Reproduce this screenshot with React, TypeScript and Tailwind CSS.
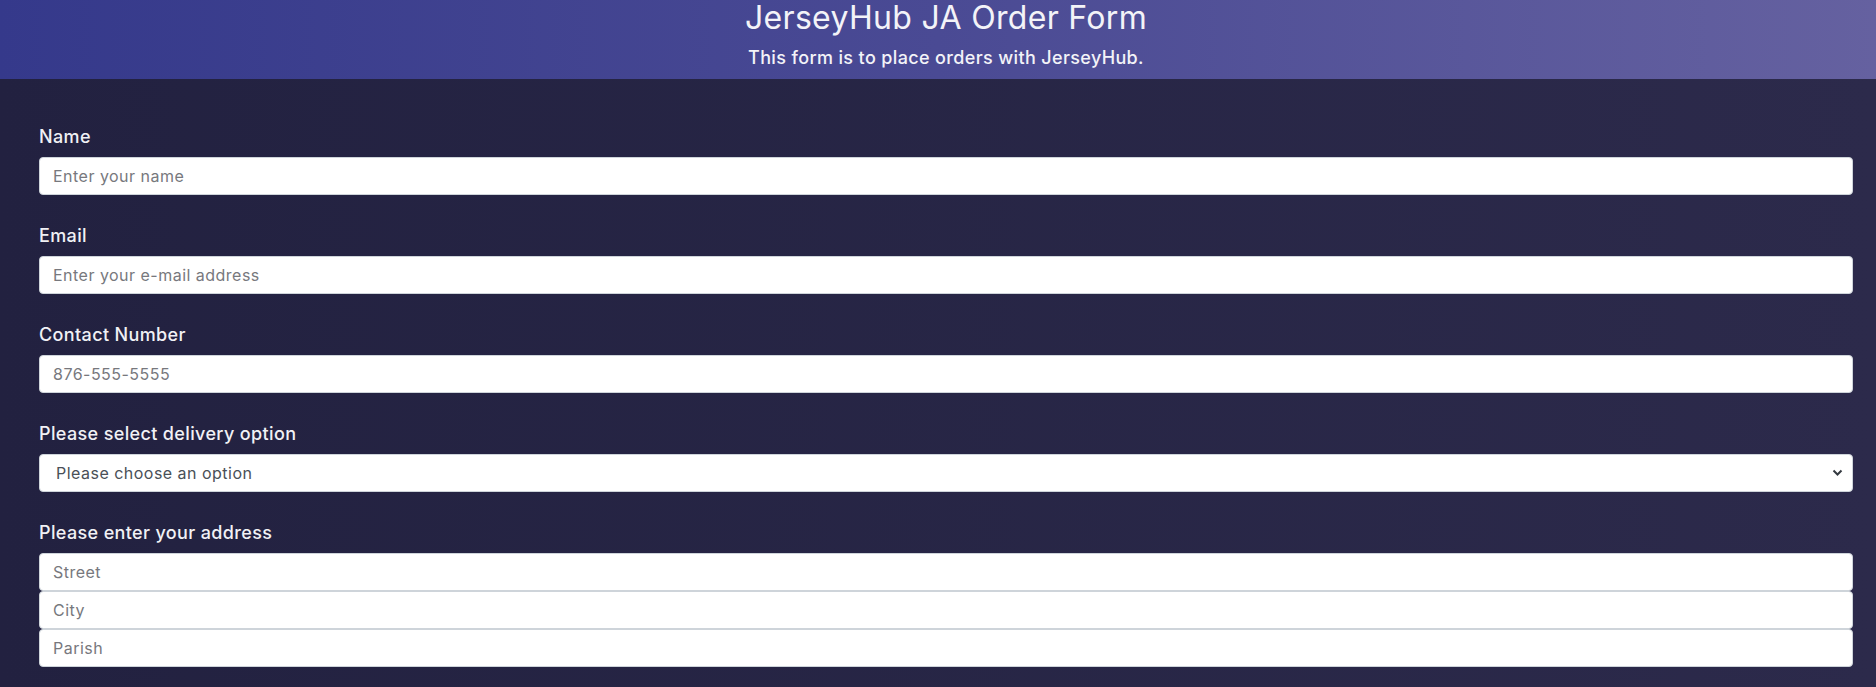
export default function App() {
  return (
    <div className="min-h-[687px] bg-gradient-to-r from-[#222140] to-[#2c2a4b] [font-family:Inter,'Open_Sans',sans-serif]">
      <header className="h-[79px] pl-[16px] bg-gradient-to-r from-[#35398b] via-[#4a4a94] to-[#6561a0] text-center flex flex-col items-center">
        <h1 className="text-[32px] leading-[36px] tracking-[0.01em] text-[#f3f3f8]">JerseyHub JA Order Form</h1>
        <p className="text-[18px] leading-[24px] tracking-[0.02em] mt-[10px] font-medium text-[#f3f3f8]">This form is to place orders with JerseyHub.</p>
      </header>
      <form className="pl-[39px] pr-[23px] pt-[44px]">
        <Field label="Name" placeholder="Enter your name" />
        <Field label="Email" placeholder="Enter your e-mail address" />
        <Field label="Contact Number" placeholder="876-555-5555" />
        <div className="mb-[27px]">
          <Label text="Please select delivery option" />
          <div className="relative">
            <select className="w-full h-[38px] appearance-none bg-white rounded-[4px] border border-[#ced4da] pl-[16px] text-[16px] tracking-[0.03em] text-[#495057] outline-none">
              <option>Please choose an option</option>
            </select>
            <svg className="absolute right-[10px] top-[15px] pointer-events-none" width="11" height="8" viewBox="0 0 11 8">
              <path d="M1.5 1.5 L5.5 5.5 L9.5 1.5" fill="none" stroke="#343a40" strokeWidth="2" />
            </svg>
          </div>
        </div>
        <div>
          <Label text="Please enter your address" />
          <div className="flex flex-col">
            <Input placeholder="Street" />
            <Input placeholder="City" />
            <Input placeholder="Parish" />
          </div>
        </div>
      </form>
    </div>
  );
}

function Label({ text }: { text: string }) {
  return (
    <label className="block text-[18px] leading-[27px] tracking-[0.02em] font-medium mb-[7px] text-[#f1f1f5]">{text}</label>
  );
}

function Input({ placeholder }: { placeholder: string }) {
  return (
    <input
      placeholder={placeholder}
      className="w-full h-[38px] bg-white rounded-[4px] border border-[#ced4da] px-[13px] text-[16px] tracking-[0.03em] placeholder:text-[#77787d] outline-none"
    />
  );
}

function Field({ label, placeholder }: { label: string; placeholder: string }) {
  return (
    <div className="mb-[27px]">
      <Label text={label} />
      <Input placeholder={placeholder} />
    </div>
  );
}
